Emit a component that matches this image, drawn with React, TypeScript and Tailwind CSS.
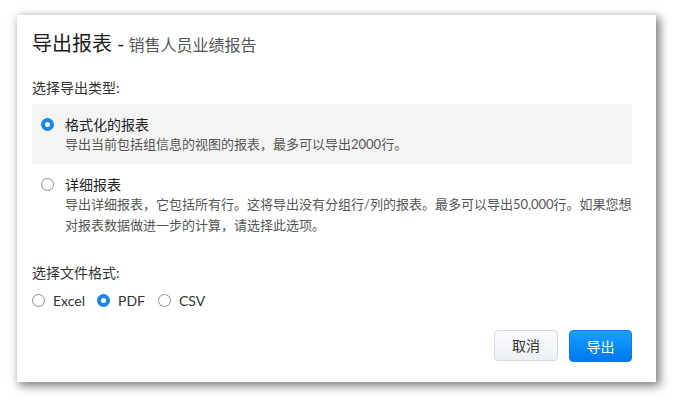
import React from 'react';

const font = { fontFamily: 'Lato, "Noto Sans CJK SC", sans-serif' };

const Radio: React.FC<{ checked?: boolean }> = ({ checked }) =>
  checked ? (
    <span className="flex h-[13px] w-[13px] shrink-0 items-center justify-center rounded-full bg-[#1a86e8]">
      <span className="h-[5px] w-[5px] rounded-full bg-white" />
    </span>
  ) : (
    <span className="h-[13px] w-[13px] shrink-0 rounded-full border-[1.5px] border-[#8f8f8f] bg-white" />
  );

export default function App() {
  return (
    <div className="h-[397px] w-[673px] bg-white pl-[17px] pt-[15px]" style={font}>
      <div className="flex h-[367px] w-[639px] flex-col bg-white pl-[15px] pr-[24px] shadow-[3px_3px_9px_1px_rgba(0,0,0,0.5)]">
        <div className="box-content flex h-[28px] items-baseline pt-[14px] leading-[28px]">
          <span className="text-[20px] text-[#1c1c1c]">导出报表 -</span>
          <span className="ml-[4px] text-[16px] text-[#555]">销售人员业绩报告</span>
        </div>

        <div className="mt-[21px] text-[14px] leading-[20px] text-[#333]">选择导出类型:</div>

        <div className="mt-[6px] rounded-[3px] bg-[#f4f4f4] pb-[9px] pl-[9px] pt-[10px]">
          <div className="flex h-[20px] items-center gap-[11px]">
            <Radio checked />
            <span className="text-[14px] text-[#222]">格式化的报表</span>
          </div>
          <div className="pl-[24px] text-[13px] leading-[21px] text-[#555]">
            导出当前包括组信息的视图的报表，最多可以导出2000行。
          </div>
        </div>

        <div className="pl-[9px] pt-[10px]">
          <div className="flex h-[20px] items-center gap-[11px]">
            <Radio />
            <span className="text-[14px] text-[#222]">详细报表</span>
          </div>
          <div className="w-[596px] pl-[24px] text-[13px] leading-[21px] text-[#555]">
            导出详细报表，它包括所有行。这将导出没有分组行/列的报表。最多可以导出50,000行。如果您想对报表数据做进一步的计算，请选择此选项。
          </div>
        </div>

        <div className="mt-[27px] text-[14px] leading-[20px] text-[#333]">选择文件格式:</div>

        <div className="mt-[7px] flex h-[20px] items-center text-[14px] text-[#333]">
          <Radio />
          <span className="ml-[8px]">Excel</span>
          <span className="ml-[12px]" />
          <Radio checked />
          <span className="ml-[8px]">PDF</span>
          <span className="ml-[13px]" />
          <Radio />
          <span className="ml-[8px]">CSV</span>
        </div>

        <div className="mt-auto flex justify-end gap-[11px] pb-[20px]">
          <button className="h-[31px] w-[64px] rounded-[4px] border border-[#d5dae3] bg-gradient-to-b from-[#fbfcfe] to-[#eceff5] text-[14px] text-[#333]">
            取消
          </button>
          <button className="h-[32px] w-[63px] rounded-[4px] border border-[#0a7ae6] bg-gradient-to-b from-[#1aa0ff] to-[#0077f0] text-[14px] text-white">
            导出
          </button>
        </div>
      </div>
    </div>
  );
}
